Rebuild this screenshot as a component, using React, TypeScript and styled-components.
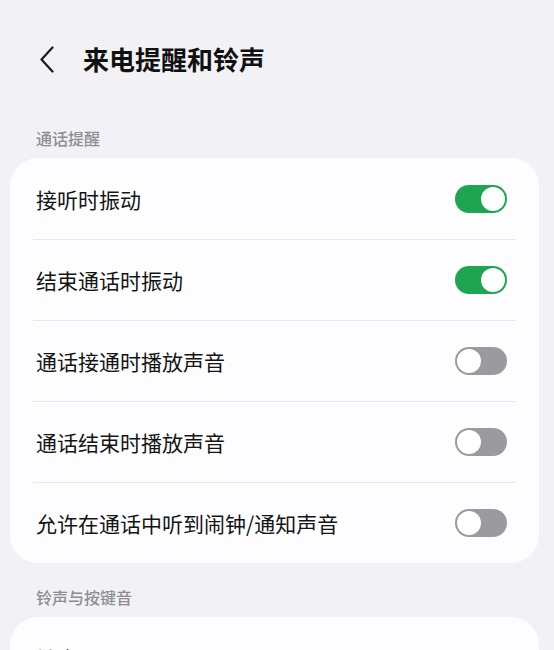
import React, { useState } from 'react';
import styled, { createGlobalStyle } from 'styled-components';

const GlobalStyle = createGlobalStyle`
  body {
    margin: 0;
    background: #f2f1f6;
    font-family: "Noto Sans CJK SC", "Noto Sans", sans-serif;
    color: #111;
  }
`;

const Page = styled.div`
  display: flex;
  flex-direction: column;
  padding: 0 15px 40px 10px;
`;

const Header = styled.div`
  height: 104px;
  display: flex;
  align-items: flex-start;
  padding: 44px 0 0 30px;
  box-sizing: border-box;
  gap: 29px;
`;

const BackButton = styled.button`
  width: 14px;
  height: 30px;
  padding: 0;
  border: none;
  background: none;
  display: flex;
  align-items: center;
  justify-content: center;
`;

const Title = styled.h1`
  margin: 0;
  font-size: 26px;
  line-height: 30px;
  font-weight: 700;
  color: #111;
`;

const SectionLabel = styled.div`
  margin: 24px 0 10px;
  padding-left: 26px;
  height: 20px;
  line-height: 20px;
  font-size: 16px;
  font-weight: 500;
  color: #8d8d92;
`;

const Card = styled.div`
  background: #fdfdff;
  border-radius: 28px;
  overflow: hidden;
`;

const Row = styled.div`
  height: 81px;
  display: flex;
  align-items: center;
  justify-content: space-between;
  padding: 0 32px 0 26px;
  position: relative;

  & + &::before {
    content: "";
    position: absolute;
    top: 0;
    left: 23px;
    right: 23px;
    height: 1px;
    background: #e7e7eb;
  }
`;

const RowText = styled.span`
  font-size: 21px;
  color: #141414;
`;

const Track = styled.button<{ $on: boolean }>`
  width: 52px;
  height: 28px;
  padding: 2px;
  border: none;
  border-radius: 14px;
  background: ${(p) => (p.$on ? '#1fa452' : '#9a9a9f')};
  display: flex;
  justify-content: ${(p) => (p.$on ? 'flex-end' : 'flex-start')};
  align-items: center;
  cursor: pointer;
  box-sizing: border-box;
`;

const Knob = styled.span`
  width: 24px;
  height: 24px;
  border-radius: 50%;
  background: #fff;
`;

const Toggle = ({ initial }: { initial: boolean }) => {
  const [on, setOn] = useState(initial);
  return (
    <Track $on={on} onClick={() => setOn(!on)}>
      <Knob />
    </Track>
  );
};

const reminders = [
  { label: '接听时振动', on: true },
  { label: '结束通话时振动', on: true },
  { label: '通话接通时播放声音', on: false },
  { label: '通话结束时播放声音', on: false },
  { label: '允许在通话中听到闹钟/通知声音', on: false },
];

export default function App() {
  return (
    <>
      <GlobalStyle />
      <Page>
        <Header>
          <BackButton aria-label="返回">
            <svg width="14" height="27" viewBox="0 0 14 27" fill="none">
              <path d="M12.5 1.5 L1.5 13.5 L12.5 25.5" stroke="#1a1a1a" strokeWidth="2.2" strokeLinecap="round" strokeLinejoin="round" />
            </svg>
          </BackButton>
          <Title>来电提醒和铃声</Title>
        </Header>

        <SectionLabel>通话提醒</SectionLabel>
        <Card>
          {reminders.map((r) => (
            <Row key={r.label}>
              <RowText>{r.label}</RowText>
              <Toggle initial={r.on} />
            </Row>
          ))}
        </Card>

        <SectionLabel>铃声与按键音</SectionLabel>
        <Card>
          <Row>
            <RowText>铃声</RowText>
          </Row>
          <Row>
            <RowText>振动模式</RowText>
          </Row>
        </Card>
      </Page>
    </>
  );
}
